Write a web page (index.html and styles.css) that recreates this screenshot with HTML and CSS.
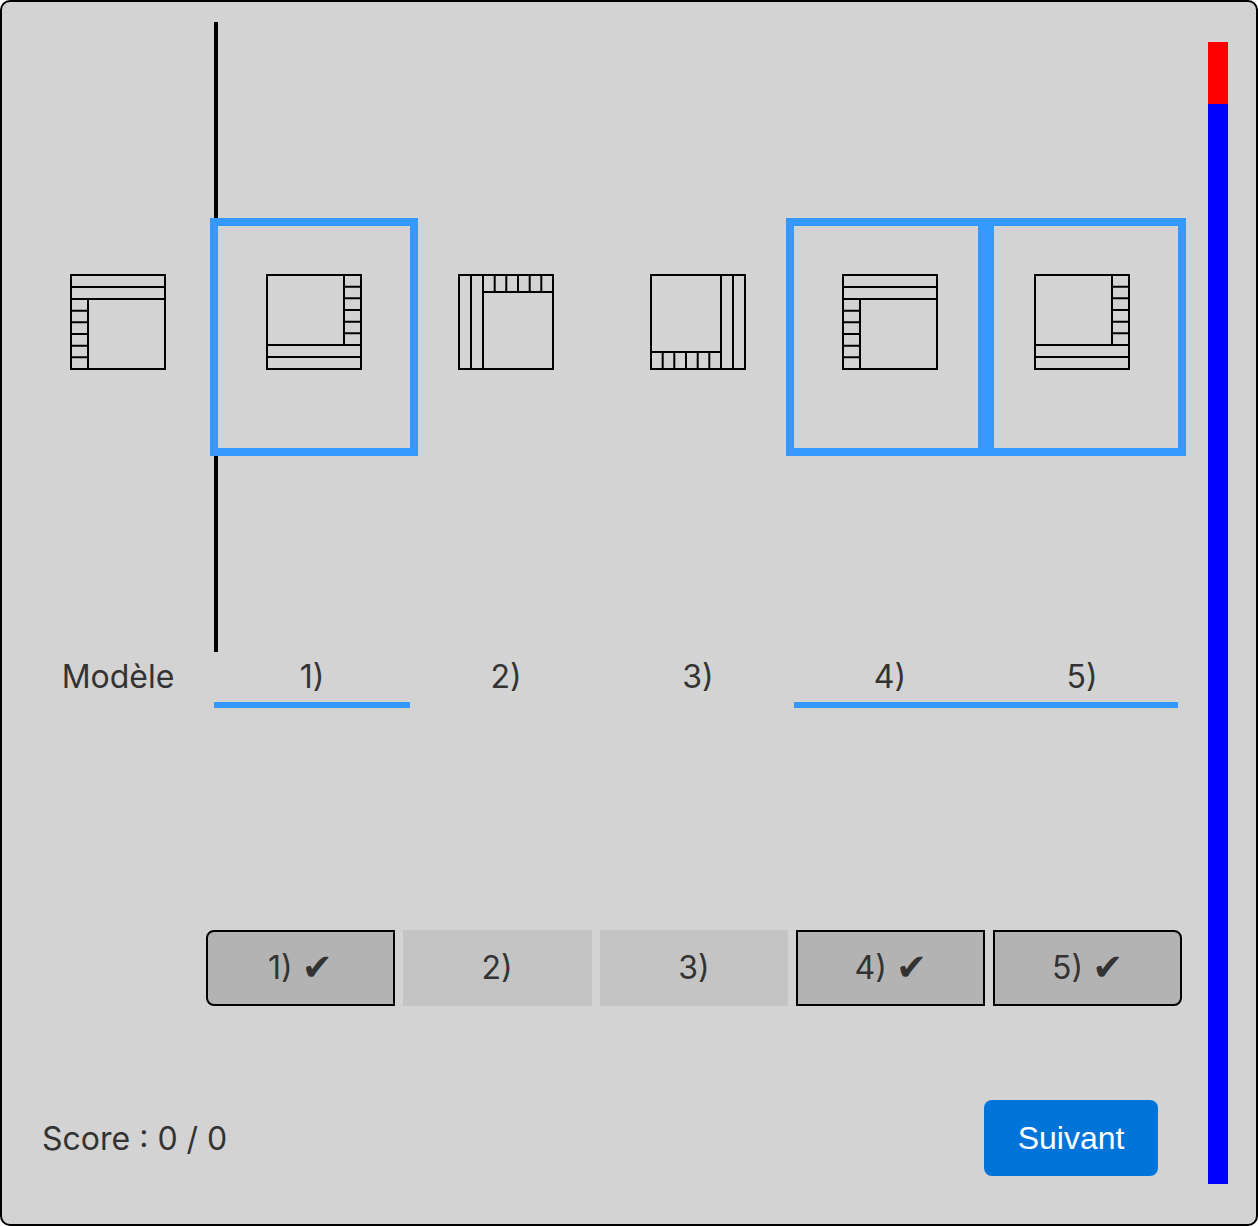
FILE: index.html
```html
<!DOCTYPE html>
<html lang="fr">
<head>
<meta charset="utf-8">
<title>Modèle</title>
<link rel="stylesheet" href="styles.css">
</head>
<body>
<div class="app">
  <div class="main">
    <div class="images">
      <div class="cell">
        <div class="frame">
          <svg class="icon" viewBox="0 0 96 96" width="96" height="96"><g class="ic"><rect x="1" y="1" width="94" height="94"/><path d="M1 13H95M1 25H95M18 25V95M1 36.7H18M1 48.3H18M1 60H18M1 71.7H18M1 83.3H18"/></g></svg>
        </div>
      </div>
      <div class="divider"></div>
      <div class="cell">
        <div class="frame selected">
          <svg class="icon" viewBox="0 0 96 96" width="96" height="96"><g class="ic" transform="rotate(180 48 48)"><rect x="1" y="1" width="94" height="94"/><path d="M1 13H95M1 25H95M18 25V95M1 36.7H18M1 48.3H18M1 60H18M1 71.7H18M1 83.3H18"/></g></svg>
        </div>
      </div>
      <div class="cell">
        <div class="frame">
          <svg class="icon" viewBox="0 0 96 96" width="96" height="96"><g class="ic" transform="matrix(0 1 1 0 0 0)"><rect x="1" y="1" width="94" height="94"/><path d="M1 13H95M1 25H95M18 25V95M1 36.7H18M1 48.3H18M1 60H18M1 71.7H18M1 83.3H18"/></g></svg>
        </div>
      </div>
      <div class="cell">
        <div class="frame">
          <svg class="icon" viewBox="0 0 96 96" width="96" height="96"><g class="ic" transform="rotate(180 48 48) matrix(0 1 1 0 0 0)"><rect x="1" y="1" width="94" height="94"/><path d="M1 13H95M1 25H95M18 25V95M1 36.7H18M1 48.3H18M1 60H18M1 71.7H18M1 83.3H18"/></g></svg>
        </div>
      </div>
      <div class="cell">
        <div class="frame selected">
          <svg class="icon" viewBox="0 0 96 96" width="96" height="96"><g class="ic"><rect x="1" y="1" width="94" height="94"/><path d="M1 13H95M1 25H95M18 25V95M1 36.7H18M1 48.3H18M1 60H18M1 71.7H18M1 83.3H18"/></g></svg>
        </div>
      </div>
      <div class="cell">
        <div class="frame selected">
          <svg class="icon" viewBox="0 0 96 96" width="96" height="96"><g class="ic" transform="rotate(180 48 48)"><rect x="1" y="1" width="94" height="94"/><path d="M1 13H95M1 25H95M18 25V95M1 36.7H18M1 48.3H18M1 60H18M1 71.7H18M1 83.3H18"/></g></svg>
        </div>
      </div>
    </div>
    <div class="labels">
      <div class="label model">Modèle</div>
      <div class="label first on">1)</div>
      <div class="label">2)</div>
      <div class="label">3)</div>
      <div class="label on">4)</div>
      <div class="label on">5)</div>
    </div>
    <div class="buttons">
      <button class="choice picked first-btn">1) <span class="check">✔</span></button>
      <button class="choice">2)</button>
      <button class="choice">3)</button>
      <button class="choice picked">4) <span class="check">✔</span></button>
      <button class="choice picked last-btn">5) <span class="check">✔</span></button>
    </div>
    <div class="footer">
      <div class="score">Score : 0 / 0</div>
      <button class="next">Suivant</button>
    </div>
  </div>
  <div class="bar">
    <div class="bar-red"></div>
    <div class="bar-blue"></div>
  </div>
</div>
</body>
</html>
```
FILE: styles.css
```css
html, body {
  margin: 0;
  padding: 0;
  background: #ffffff;
}

body {
  font-family: Inter, "Liberation Sans", Arial, "DejaVu Sans", sans-serif;
  color: #333333;
}

.app {
  width: 1258px;
  height: 1226px;
  box-sizing: border-box;
  border: 2px solid #000000;
  border-radius: 10px;
  background: #d3d3d3;
  padding: 20px;
  display: flex;
}

.main {
  width: 1186px;
  display: flex;
  flex-direction: column;
}

.images {
  display: grid;
  grid-template-columns: 192px 4px repeat(5, 192px);
  height: 630px;
}

.cell {
  display: flex;
  justify-content: center;
  align-items: center;
}

.divider {
  background: #000000;
}

.frame {
  width: 208px;
  height: 238px;
  flex: 0 0 208px;
  box-sizing: border-box;
  border: 8px solid transparent;
  padding-top: 48px;
  display: flex;
  justify-content: center;
  align-items: flex-start;
  position: relative;
}

.frame.selected {
  border-color: #3399ff;
}

.icon {
  display: block;
}

.ic {
  fill: none;
  stroke: #000000;
  stroke-width: 2;
}

.labels {
  display: grid;
  grid-template-columns: 192px 4px repeat(5, 192px);
}

.label {
  font-size: 32px;
  line-height: 38px;
  padding: 6px 0 6px;
  border-bottom: 6px solid transparent;
  text-align: center;
}

.label.first {
  grid-column: 2 / span 2;
}

.label.on {
  border-bottom-color: #3399ff;
}

.buttons {
  margin-top: 222px;
  padding-left: 184px;
  display: flex;
  gap: 8px;
}

.choice {
  width: 188.8px;
  height: 76px;
  box-sizing: border-box;
  border: 2px solid transparent;
  background: #c4c4c4;
  font-family: Inter, "Liberation Sans", Arial, "DejaVu Sans", sans-serif;
  font-size: 32px;
  line-height: 38px;
  color: #333333;
  padding: 0;
  border-radius: 0;
}

.check {
  font-family: "DejaVu Sans", sans-serif;
  font-size: 37px;
  line-height: 38px;
  vertical-align: -1px;
}

.choice.picked {
  background: #b3b3b3;
  border-color: #000000;
}

.choice.first-btn {
  border-radius: 8px 0 0 8px;
}

.choice.last-btn {
  border-radius: 0 8px 8px 0;
}

.footer {
  margin-top: 94px;
  padding-left: 20px;
  padding-right: 50px;
  display: flex;
  justify-content: space-between;
  align-items: center;
}

.score {
  font-size: 32px;
}

.next {
  width: 174px;
  height: 76px;
  border: none;
  border-radius: 8px;
  background: #0074d9;
  color: #ffffff;
  font-family: "Liberation Sans", Arial, sans-serif;
  font-size: 32px;
  padding: 0;
}

.bar {
  width: 20px;
  margin: 20px 8px 20px 0;
  display: flex;
  flex-direction: column;
}

.bar-red {
  height: 62px;
  background: #ff0000;
}

.bar-blue {
  flex: 1;
  background: #0000ff;
}
```
